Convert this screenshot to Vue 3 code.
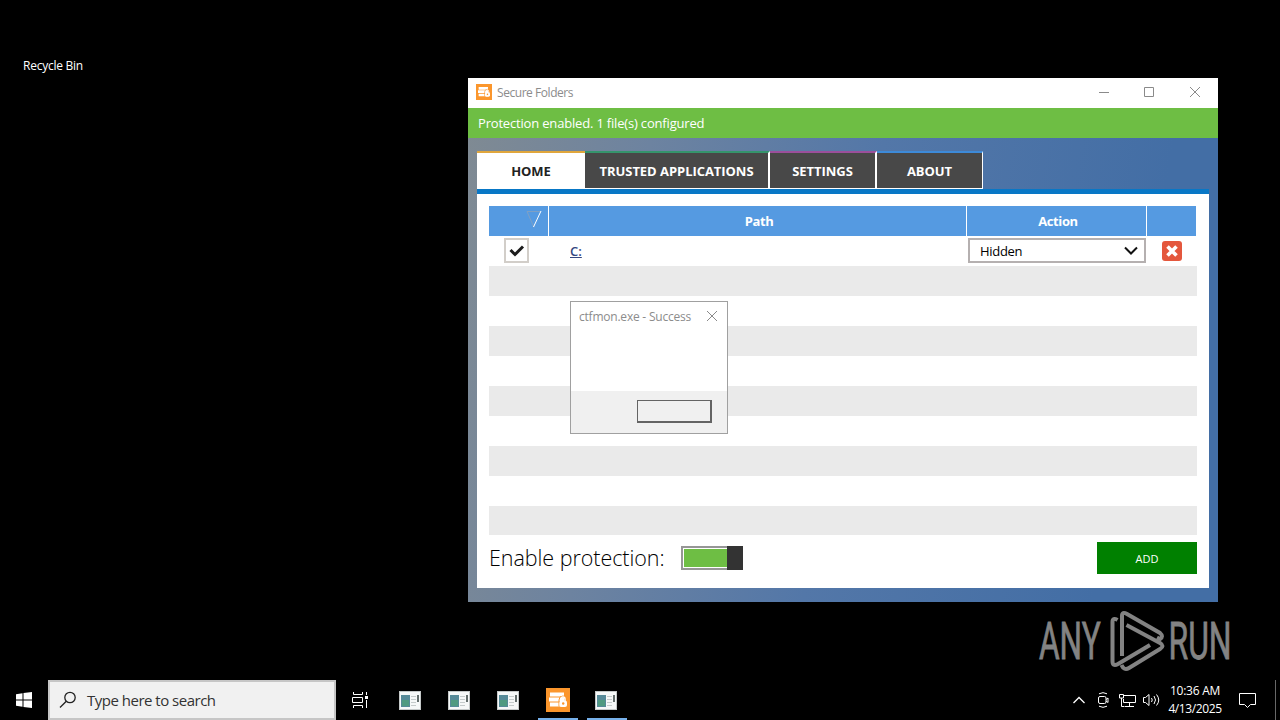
<template>
  <div class="desktop">
    <div class="recycle">Recycle Bin</div>

    <div class="window">
      <div class="titlebar">
        <svg class="app-icon" viewBox="0 0 24 24">
          <rect width="24" height="24" fill="#fb962c" />
          <path d="M4 4.500h14v4H4zM3 9.500h15v4H3zM4 14.500h14v4H4z" fill="#fff" />
          <path d="M13 18.500v-6.500a4 4 0 0 1 8 0v7" fill="none" stroke="#fb962c" />
          <path d="M15 13v-2a2 2 0 0 1 4 0v2" fill="none" stroke="#fff" stroke-width="1.500" />
          <rect x="13.500" y="12.500" width="7.500" height="6.500" rx="2" fill="#fff" />
          <circle cx="17.200" cy="15.500" r="1.200" fill="#fb962c" />
        </svg>
        <span class="title">Secure Folders</span>
        <div class="controls">
          <svg width="12" height="12"><path d="M1 6.500h10" /></svg>
          <svg width="12" height="12"><path d="M1.500 1.500h9v9h-9z" /></svg>
          <svg width="12" height="12"><path d="M1 1l10 10M11 1L1 11" /></svg>
        </div>
      </div>

      <div class="banner"><span>Protection enabled. 1 file(s) configured</span></div>

      <div class="body">
        <div class="tabs">
          <div
            v-for="tab in tabs"
            :key="tab.id"
            class="tab"
            :class="[tab.id, { active: tab.id === current }]"
            @click="current = tab.id"
          >
            <span>{{ tab.label }}</span>
          </div>
        </div>

        <div class="panel">
          <div class="grid">
            <div class="row head">
              <div class="cell check">
                <svg class="sort" width="16" height="20">
                  <path d="M1 2.500h13M1 2.500l7 16" stroke="#7fa0c4" fill="none" />
                  <path d="M15 2L7.500 18" stroke="#fff" fill="none" />
                </svg>
              </div>
              <div class="cell path"><span>Path</span></div>
              <div class="cell action"><span>Action</span></div>
              <div class="cell remove"></div>
            </div>

            <div class="row">
              <div class="cell check">
                <div class="checkbox">
                  <svg width="16" height="14"><path d="M1.500 6l4.500 4.500L14 2.500" fill="none" stroke="#1c1c1c" stroke-width="3" /></svg>
                </div>
              </div>
              <div class="cell path"><a class="link">C:</a></div>
              <div class="cell action">
                <div class="select">
                  <span>Hidden</span>
                  <svg width="14" height="9"><path d="M1 1.500l6 6 6-6" fill="none" stroke="#111" stroke-width="2" /></svg>
                </div>
              </div>
              <div class="cell remove">
                <svg width="20" height="20">
                  <rect width="20" height="20" rx="3" fill="#e4573d" />
                  <path d="M5.500 5.500l9 9M14.500 5.500l-9 9" stroke="#fff" stroke-width="3.600" />
                </svg>
              </div>
            </div>

            <div v-for="n in 9" :key="n" class="row blank"></div>
          </div>

          <div class="footer">
            <span class="label">Enable protection:</span>
            <div class="switch" :class="{ off: !enabled }" @click="enabled = !enabled">
              <div class="fill"></div>
              <div class="knob"></div>
            </div>
            <button class="add"><span>ADD</span></button>
          </div>
        </div>
      </div>
    </div>

    <div class="dialog">
      <div class="dialog-title">
        <span>ctfmon.exe - Success</span>
        <svg width="12" height="12"><path d="M1 1l10 10M11 1L1 11" /></svg>
      </div>
      <div class="dialog-actions"><div class="dialog-button"></div></div>
    </div>

    <svg class="watermark" width="210" height="64">
      <text transform="translate(1 49) scale(0.620 1)">ANY</text>
      <text transform="translate(130.500 49) scale(0.625 1)">RUN</text>
      <path d="M79.500 10Q74.500 7 74.500 12V51Q74.500 57 80 54L112 35" />
      <path d="M84 46V6Q84 1 89 4L122 23Q126 26.500 122 29L119 27.500" />
      <path d="M88.500 15L122 33Q127 36 122 39L91 58Q86 61 83.500 55" />
    </svg>

    <div class="taskbar">
      <div class="start">
        <svg width="16" height="16" fill="#fff">
          <path d="M0 2.200L6.500 1.300V7.500H0zM7.500 1.100L16 0V7.500H7.500zM0 8.500H6.500V14.700L0 13.800zM7.500 8.500H16V16L7.500 14.900z" />
        </svg>
      </div>
      <div class="search">
        <svg width="18" height="18" fill="none" stroke="#222" stroke-width="1.300">
          <circle cx="11" cy="6.500" r="5.200" />
          <path d="M7.300 10.200L1 16.500" />
        </svg>
        <span>Type here to search</span>
      </div>
      <div class="taskview">
        <svg width="17" height="16" fill="none" stroke="#fff">
          <path d="M1.500 0v2.500h9V0M.500 5.500h10v5H.500zM1.500 16v-2.500h9V16M14.500 0v3M14.500 8v8" />
          <rect x="13" y="4" width="3" height="3" fill="#fff" stroke="none" />
        </svg>
      </div>
      <div v-for="(app, i) in apps" :key="i" class="app" :class="{ running: app.running }">
        <svg v-if="app.kind === 'folders'" width="24" height="24" viewBox="0 0 24 24">
          <rect width="24" height="24" fill="#fb962c" />
          <path d="M4 4.500h14v4H4zM3 9.500h15v4H3zM4 14.500h14v4H4z" fill="#fff" />
          <path d="M13 18.500v-6.500a4 4 0 0 1 8 0v7" fill="none" stroke="#fb962c" />
          <path d="M15 13v-2a2 2 0 0 1 4 0v2" fill="none" stroke="#fff" stroke-width="1.500" />
          <rect x="13.500" y="12.500" width="7.500" height="6.500" rx="2" fill="#fff" />
          <circle cx="17.200" cy="15.500" r="1.200" fill="#fb962c" />
        </svg>
        <svg v-else class="win" width="22" height="19">
          <rect width="22" height="19" fill="#c4c8c8" />
          <rect x="1" y="1" width="20" height="17" fill="#f6f8f8" />
          <rect x="2" y="4" width="9" height="12" fill="#568a98" />
          <rect x="3" y="9" width="7" height="6" fill="#4f9a80" />
          <path d="M12 5.500h5M12 8.500h5M12 11.500h5M12 14.500h5" stroke="#c5cbcb" />
          <path d="M19 4v7" stroke="#33413f" stroke-width="1.500" />
        </svg>
      </div>
      <div class="tray">
        <svg class="chevron" width="12" height="8"><path d="M.500 7L6 1.500 11.500 7" stroke-width="1.300" /></svg>
        <svg class="camera" width="12" height="16">
          <path d="M2 1.800Q6 -.500 10 1.800M2 14.200Q6 16.500 10 14.200M9 7.500l2-1.500v4.500L9 9" />
          <rect x="1.500" y="4.500" width="7.500" height="7" rx="1.500" />
        </svg>
        <svg class="network" width="17" height="15">
          <path d="M5 2.500h11.500v7H4.500V6M10.500 10v3M6 13.500h9M.500 1.500h4v3.500h-4zM2.500 5v8.500h3" />
        </svg>
        <svg class="sound" width="17" height="14">
          <path d="M.500 4.500h2L6 1.500v11L2.500 9.500h-2zM8.500 5q1.500 2 0 4M11 3q3 4 0 8M13.500 1.500q4.500 5.500 0 11" />
        </svg>
        <div class="clock">
          <span class="time">10:36 AM</span>
          <span class="date">4/13/2025</span>
        </div>
        <svg class="notify" width="17" height="17"><path d="M.500 1.500h16v11h-5l-3 3-3-3h-5z" /></svg>
      </div>
    </div>
  </div>
</template>

<script setup>
import { ref } from "vue"

const current = ref("home")
const enabled = ref(true)

const tabs = [
  { id: "home", label: "HOME" },
  { id: "trusted", label: "TRUSTED APPLICATIONS" },
  { id: "settings", label: "SETTINGS" },
  { id: "about", label: "ABOUT" }
]

const apps = [
  { kind: "window", running: false },
  { kind: "window", running: false },
  { kind: "window", running: false },
  { kind: "folders", running: true },
  { kind: "window", running: true }
]
</script>

<style>
body {
  margin: 0;
  background: #000;
  overflow: hidden;
}
</style>

<style scoped>
.desktop {
  position: relative;
  width: 1280px;
  height: 720px;
  background: #000;
  overflow: hidden;
  font-family: "Open Sans", "Noto Sans", sans-serif;
  font-size: 12px;
  white-space: nowrap;
}

.desktop svg {
  display: block;
  flex: none;
}

.desktop * {
  box-sizing: border-box;
}

.recycle {
  position: absolute;
  left: 23px;
  top: 58px;
  line-height: 16px;
  font-size: 12px;
  letter-spacing: -0.25px;
  color: #fff;
}

.window {
  position: absolute;
  left: 468px;
  top: 78px;
  width: 750px;
  height: 524px;
  display: flex;
  flex-direction: column;
  background: #fff;
}

.titlebar {
  height: 30px;
  display: flex;
  align-items: center;
  padding-left: 8px;
  color: #8c8c8c;
}

.app-icon {
  width: 16px;
  height: 16px;
  margin: 0 5px 2px 0;
}

.title {
  margin-bottom: 1px;
  letter-spacing: -0.45px;
}

.controls {
  display: flex;
  gap: 33px;
  margin: 0 17px 2px auto;
}

.controls svg:not(:last-child) {
  margin: 0 1px 0 -1px;
}

.controls svg,
.dialog-title svg {
  fill: none;
  stroke: #8a8a8a;
}

.banner {
  height: 30px;
  display: flex;
  align-items: center;
  padding-left: 10px;
  background: #6ebe44;
  color: #fff;
  font-size: 13px;
  letter-spacing: -0.18px;
}

.body {
  flex: 1;
  padding: 13px 9px 14px;
  background: linear-gradient(100deg, #7f8a93 0%, #6d83a0 22%, #5377a8 50%, #436ea5 85%);
}

.tabs {
  display: flex;
  height: 38px;
}

.tab {
  width: 107px;
  height: 38px;
  display: flex;
  align-items: center;
  justify-content: center;
  border-top: 2px solid #3d8ad8;
  border-right: 2px solid #fff;
  border-bottom: 1px solid #fff;
  background: #484848;
  color: #fff;
  font-size: 13px;
  font-weight: 700;
  letter-spacing: -0.05px;
  cursor: pointer;
}

.tab.home {
  width: 108px;
  border-top-color: #e0a63c;
  border-right: 0;
}

.tab.trusted {
  width: 185px;
  border-top-color: #35946c;
}

.tab.settings {
  border-top-color: #9b4f9b;
}

.tab.about {
  width: 106px;
  border-right-width: 1px;
}

.tab.active {
  background: #fff;
  color: #222;
}

.panel {
  height: 399px;
  border-top: 5px solid #0877c6;
  background: #fff;
  padding: 12px 12px 0;
}

.grid {
  height: 329px;
  overflow: hidden;
}

.row {
  display: flex;
  height: 30px;
}

.row:nth-child(odd):not(.head) {
  background: #eaeaea;
}

.head {
  width: 707px;
  background: #559ae1;
  color: #fff;
  font-size: 13px;
  font-weight: 700;
  letter-spacing: -0.4px;
}

.cell {
  display: flex;
  align-items: center;
  justify-content: center;
  flex: none;
}

.head .cell {
  border-right: 1px solid #fff;
}

.cell.check {
  width: 60px;
}

.cell.path {
  width: 418px;
}

.cell.action {
  width: 180px;
}

.cell.remove {
  width: 50px;
}

.head .cell.remove {
  width: 49px;
  border-right: 0;
}

.head .cell span {
  margin-left: 3px;
}

.sort {
  margin: 0 6px 4px auto;
}

.checkbox {
  width: 25px;
  height: 25px;
  display: flex;
  align-items: center;
  justify-content: center;
  margin: 0 5px 1px 0;
  border: 2px solid #d2cec9;
  background: #fff;
}

.row:not(.head) .cell.path {
  justify-content: flex-start;
  padding-left: 21px;
}

.link {
  color: #35477f;
  font-size: 13px;
  font-weight: 600;
  text-decoration: underline;
}

.select {
  width: 178px;
  height: 25px;
  display: flex;
  align-items: center;
  justify-content: space-between;
  margin-bottom: 1px;
  padding: 0 6px 0 10px;
  border: 2px solid #b5b0b0;
  background: #fff;
  color: #000;
  font-size: 13px;
  letter-spacing: -0.3px;
}

.footer {
  display: flex;
  align-items: center;
  height: 46px;
}

.label {
  width: 175px;
  margin-bottom: 2px;
  font-size: 21.5px;
  font-weight: 300;
  letter-spacing: -0.05px;
  color: #000;
}

.switch {
  width: 62px;
  height: 24px;
  display: flex;
  margin-left: 17px;
  border: 2px solid #969696;
  border-right: 0;
  background: #fff;
}

.fill {
  flex: 1;
  margin: 1px 0 1px 1px;
  background: #6ebe44;
}

.knob {
  width: 16px;
  height: 24px;
  margin-top: -2px;
  background: #333;
}

.switch.off .fill {
  background: #bbb;
}

.add {
  width: 100px;
  height: 32px;
  margin-left: auto;
  border: 0;
  background: #008000;
  color: #fff;
  font-family: inherit;
  font-size: 11px;
}

.dialog {
  position: absolute;
  left: 570px;
  top: 301px;
  width: 158px;
  height: 133px;
  display: flex;
  flex-direction: column;
  justify-content: space-between;
  border: 1px solid #a0a0a0;
  background: #fff;
}

.dialog-title {
  height: 28px;
  display: flex;
  align-items: center;
  justify-content: space-between;
  padding: 0 9px 0 8px;
  color: #8c8c8c;
  letter-spacing: -0.22px;
}

.dialog-actions {
  height: 42px;
  display: flex;
  justify-content: flex-end;
  padding: 9px 15px 0 0;
  background: #f0f0f0;
}

.dialog-button {
  width: 75px;
  height: 23px;
  border: 1px solid #646464;
  border-right-width: 2px;
  border-bottom-width: 2px;
  background: #f0f0f0;
}

.watermark {
  position: absolute;
  left: 1038px;
  top: 610px;
  fill: none;
  stroke: #838383;
  stroke-width: 4;
}

.watermark text {
  fill: #838383;
  stroke-width: 0.8;
  font-family: Roboto, sans-serif;
  font-size: 51px;
}

.taskbar {
  position: absolute;
  left: 0;
  top: 680px;
  width: 1280px;
  height: 40px;
  display: flex;
  align-items: center;
}

.start {
  width: 48px;
  display: flex;
  justify-content: center;
}

.search {
  width: 288px;
  height: 40px;
  display: flex;
  align-items: center;
  gap: 10px;
  padding-left: 9px;
  border: 2px solid #c6c6c6;
  background: #f1f1f1;
  color: #333;
  font-size: 15px;
  letter-spacing: -0.5px;
}

.taskview {
  width: 51px;
  display: flex;
  padding-left: 16px;
}

.app {
  width: 40px;
  height: 40px;
  display: flex;
  align-items: center;
  justify-content: center;
  border-top: 2px solid transparent;
  border-bottom: 2px solid transparent;
  margin: 0 5px 0 4px;
}

.app.running {
  border-bottom-color: #76b0ea;
}

.win {
  margin-right: 2px;
}

.tray {
  height: 40px;
  display: flex;
  align-items: center;
  margin-left: auto;
  padding-right: 24px;
  fill: none;
  stroke: #fff;
  color: #fff;
  position: relative;
}

.tray::after {
  content: "";
  position: absolute;
  right: 4px;
  top: 0;
  width: 1px;
  height: 40px;
  background: #686868;
}

.camera {
  margin-left: 12px;
}

.network {
  margin-left: 10px;
}

.sound {
  margin-left: 7px;
}

.clock {
  width: 54px;
  display: flex;
  flex-direction: column;
  align-items: center;
  margin-left: 8px;
  line-height: 18px;
  letter-spacing: -0.4px;
}

.time {
  letter-spacing: -0.25px;
}

.notify {
  margin-left: 17px;
}
</style>
